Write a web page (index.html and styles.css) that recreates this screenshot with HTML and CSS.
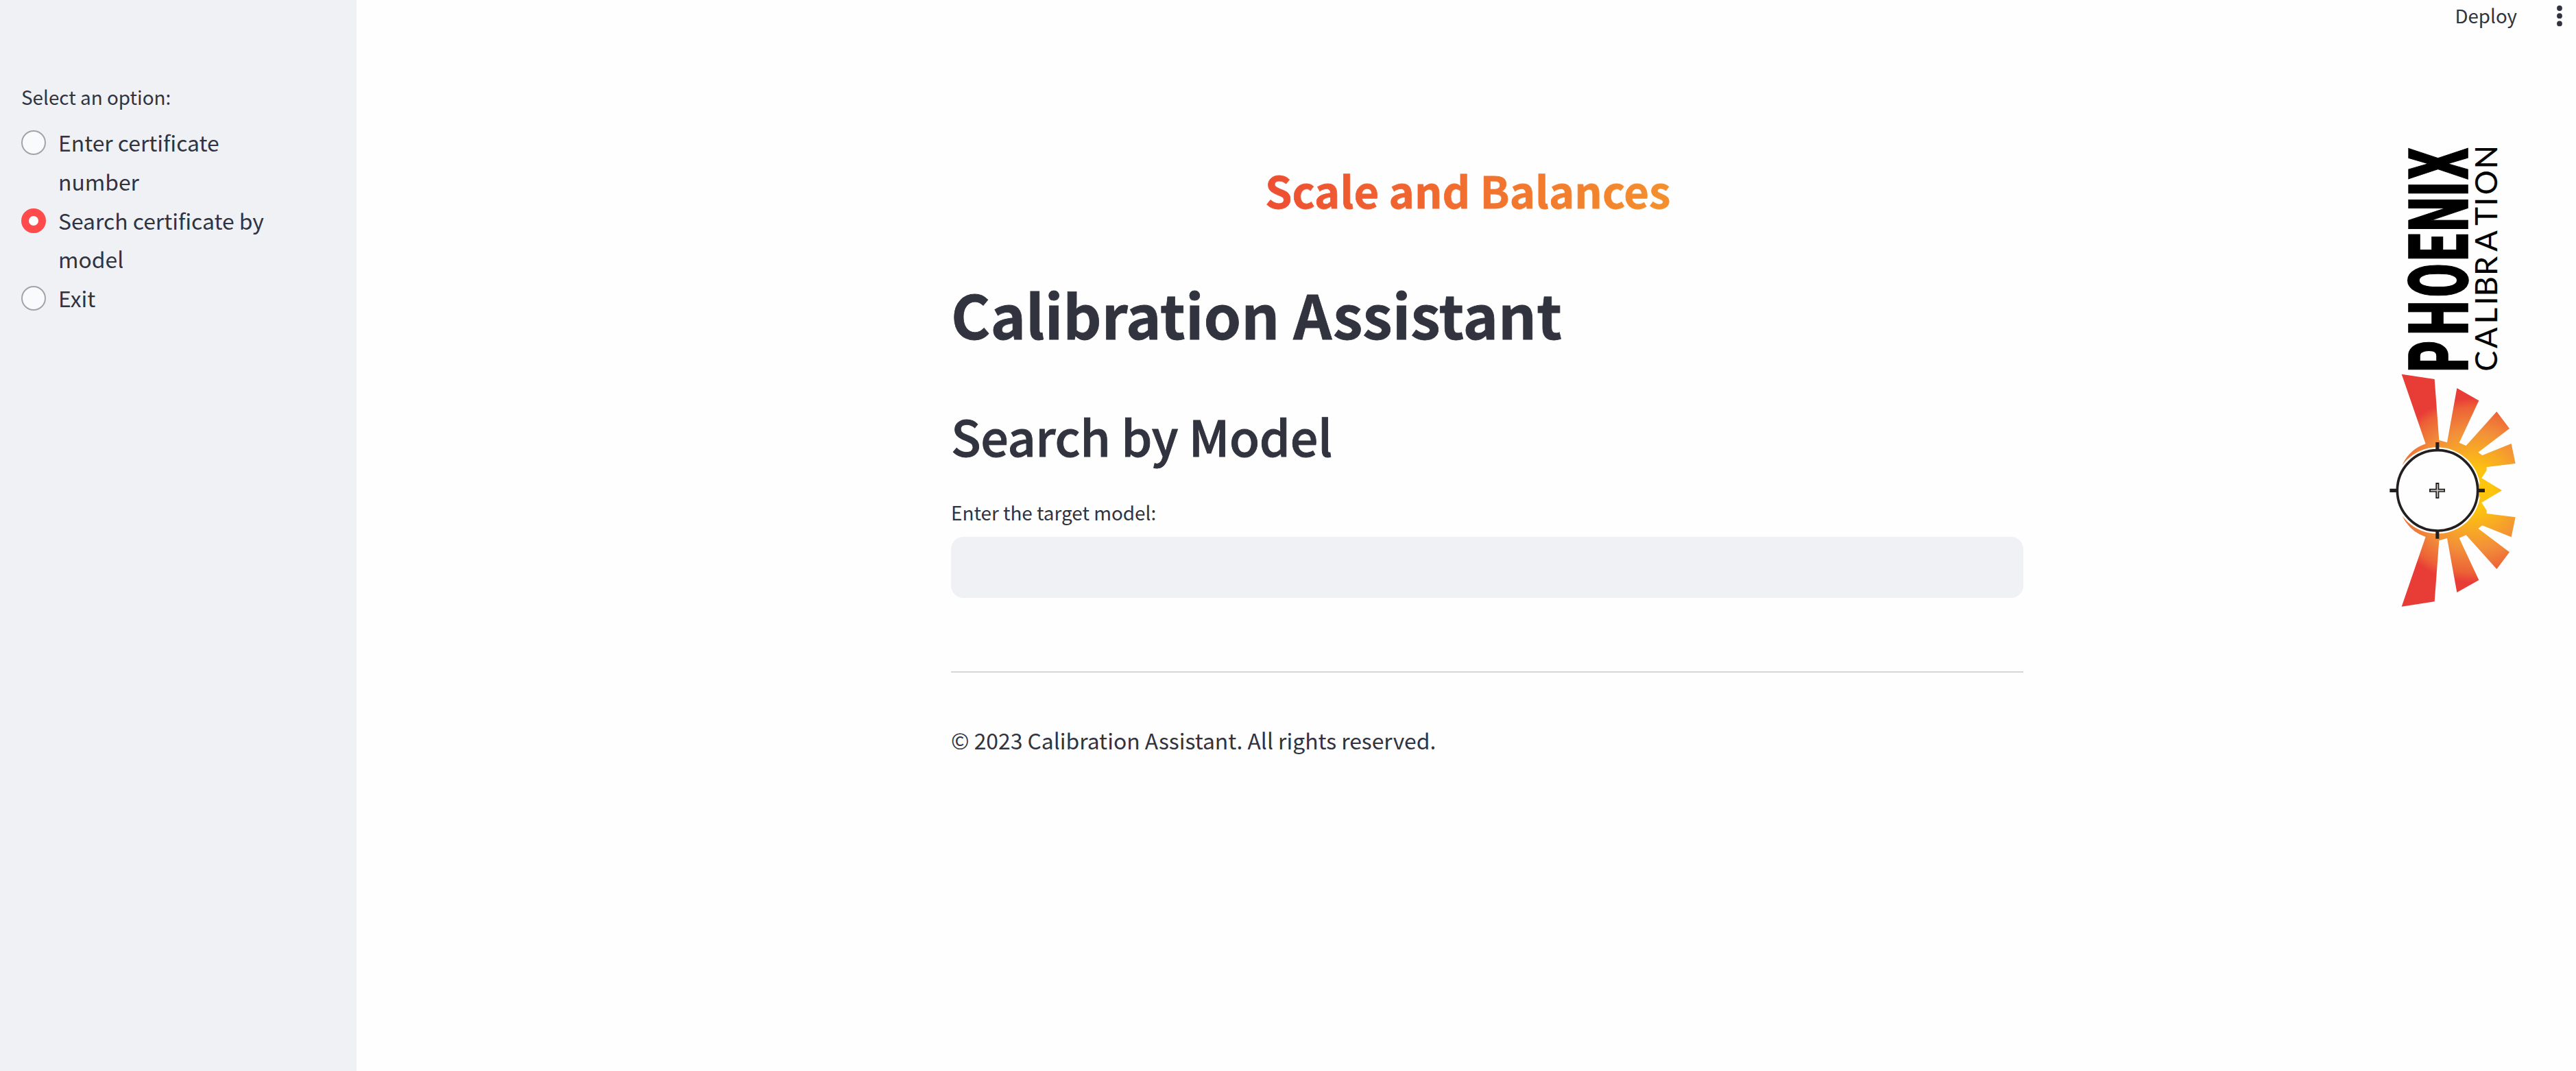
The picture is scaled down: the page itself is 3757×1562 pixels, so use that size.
FILE: index.html
```html
<!DOCTYPE html>
<html lang="en">
<head>
<meta charset="utf-8">
<title>Calibration Assistant</title>
<link rel="stylesheet" href="styles.css">
</head>
<body>
<div class="app">
  <aside class="sidebar">
    <p class="label">Select an option:</p>
    <div class="options">
      <label class="option"><span class="radio"></span><span>Enter certificate number</span></label>
      <label class="option"><span class="radio checked"></span><span>Search certificate by model</span></label>
      <label class="option"><span class="radio"></span><span>Exit</span></label>
    </div>
  </aside>
  <div class="main">
    <header class="toolbar">
      <span class="deploy">Deploy</span>
      <svg class="dots" viewBox="0 0 12 32"><circle cx="6" cy="5" r="3.9"/><circle cx="6" cy="16.2" r="3.9"/><circle cx="6" cy="27.4" r="3.9"/></svg>
    </header>
    <main class="content">
      <h3 class="category"><span>Scale and Balances</span></h3>
      <h1>Calibration Assistant</h1>
      <h2>Search by Model</h2>
      <p class="label field-label">Enter the target model:</p>
      <div class="input"></div>
      <hr>
      <p class="footer">© 2023 Calibration Assistant. All rights reserved.</p>
    </main>
    <svg class="logo" viewBox="0 0 720 2100">
      <defs>
        <radialGradient id="sun" gradientUnits="userSpaceOnUse" cx="440" cy="555" r="420">
          <stop offset="0.2" stop-color="#fdc50d"/>
          <stop offset="0.62" stop-color="#f28f3a"/>
          <stop offset="0.86" stop-color="#ec6236"/>
          <stop offset="0.96" stop-color="#e83c37"/>
        </radialGradient>
      </defs>
      <g transform="translate(417 1019) rotate(-90) scale(.587 1)">
        <text class="name" x="-15 261 544 814 1034 1294 1423">PHOENIX</text>
      </g>
      <g transform="translate(547 1019) rotate(-90)">
        <text class="sub" x="-6 95 202 284 322 413 519 633 718 766 880">CALIBRATION</text>
      </g>
      <g transform="translate(0 990)">
        <path fill="url(#sun)" d="M133 440Q165 375 233 352L128 47 272 69 292 336 327 346 370 108 466 163 380 347 410 360 544 211 600 285 463 389 481 402 608 351 626 438 500 454V468L478 502 567 555.500 478 609 500 643V657L626 673 608 760 481 709 463 722 600 826 544 900 410 751 380 764 466 948 370 1002 327 765 292 775 272 1042 128 1064 233 759Q165 736 133 671Z"/>
        <circle cx="284" cy="556" r="189" fill="#fefefe"/>
        <path fill="#fdc60d" d="M464 520L474 535V577L464 592Z"/>
        <circle cx="285" cy="556" r="176" fill="#fefefe" stroke="#231f20" stroke-width="11"/>
        <path fill="#231f20" d="M277 345h15v35h-15zM277 732h15v35h-15zM76 548h34v16h-34zM460 548h32v16h-32z"/>
        <path stroke="#231f20" stroke-width="15" d="M249 556H318M284.500 522V591"/>
        <path stroke="#c9c5c3" stroke-width="5" d="M255 556H313M284.500 528V586"/>
      </g>
    </svg>
  </div>
</div>
</body>
</html>
```
FILE: styles.css
```css
* { box-sizing: border-box; margin: 0; padding: 0; }

body {
  background: #fefefe;
  color: #31333f;
  font-family: "Noto Sans CJK SC", "Noto Sans", sans-serif;
  font-size: 31.850px;
  line-height: 56.800px;
}

.app { display: flex; height: 1562px; overflow: hidden; }

.sidebar { width: 520px; padding: 116px 31px 0; background: #f0f1f5; }
.label { font-size: 27.850px; line-height: 50px; }
.options { width: 380px; margin-top: 13px; }
.option { display: flex; gap: 18px; align-items: flex-start; }
.radio {
  flex: none;
  width: 36px;
  height: 36px;
  margin-top: 11px;
  border: 2px solid #a3a4ab;
  border-radius: 50%;
  background: #f9fafb;
}
.radio.checked { border: 11px solid #ff4b4b; background: #fff; }

.main {
  flex: 1;
  display: grid;
  grid-template: 48px 1fr / 867px 1564px 509px 240px 57px;
}
.toolbar {
  grid-column: 1 / -1;
  display: flex;
  justify-content: flex-end;
  align-items: center;
  gap: 56px;
  padding-right: 18px;
  font-size: 27.700px;
}
.deploy { margin-top: -4px; }
.dots { width: 12px; height: 32px; margin-top: -4px; margin-bottom: -2px; fill: #31333f; }

.content { grid-column: 2; padding-top: 179px; }
h1, h2, h3 { white-space: nowrap; }
.category { margin-left: 458px; font-size: 63.280px; line-height: 100px; font-weight: 700; }
.category span {
  background: linear-gradient(90deg, #ed4e32, #f4902c);
  -webkit-background-clip: text;
  background-clip: text;
  color: transparent;
  -webkit-text-stroke: 0.800px transparent;
}
h1 {
  margin-top: 71px;
  font-size: 87.500px;
  line-height: 117px;
  font-weight: 700;
  -webkit-text-stroke: 0.800px #31333f;
}
h2 {
  margin-top: 72px;
  font-size: 71.800px;
  line-height: 96px;
  font-weight: 500;
  letter-spacing: -0.400px;
  -webkit-text-stroke: 0.900px #31333f;
}
.field-label { margin-top: 39px; }
.input { height: 89px; margin-top: 11px; border-radius: 18px; background: #f0f1f5; }
hr { height: 2px; margin-top: 107px; border: 0; background: #d6d6d9; }
.footer { margin-top: 70px; }

.logo { grid-column: 4; width: 240px; height: 700px; margin-top: 152px; }
.name { font: 900 361px Roboto, sans-serif; stroke: #000; stroke-width: 5px; }
.sub { font: 400 135px Lato, sans-serif; stroke: #000; stroke-width: 0.500px; }
```
